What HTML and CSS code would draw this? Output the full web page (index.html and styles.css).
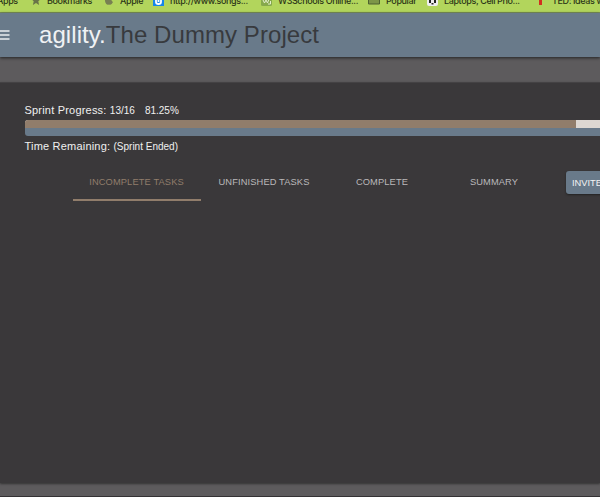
FILE: index.html
```html
<!DOCTYPE html>
<html lang="en">
<head>
<meta charset="utf-8">
<title>agility.</title>
<link rel="stylesheet" href="styles.css">
</head>
<body>
<nav class="bookmarks">
  <span class="bookmark"><span>Apps</span></span>
  <span class="bookmark"><svg width="10" height="10" viewBox="0 0 10 10"><path d="M5 0l1.400 3.400L10 3.800 7.300 6.200 8.100 10 5 8 1.900 10l.8-3.800L0 3.800l3.600-.4z" fill="#697448"/></svg><span>Bookmarks</span></span>
  <span class="bookmark"><svg width="10" height="10" viewBox="0 0 10 10"><path d="M5 3C3 1 .7 3 1 6c.4 3 2.300 4.500 4 3.500 1.700 1 3-.5 4-2.500C7 6 7.200 4 8.500 3 7.300 2 6 2.200 5 3zM5 2c0-1 1-2 2-2 0 1-1 2-2 2z" fill="#788052"/></svg><span>Apple</span></span>
  <span class="bookmark"><svg width="11" height="11" viewBox="0 0 11 11"><path fill="#1686e8" d="M0 0h11v11H0z"/><path d="M3 5v2q0 2 2.500 2T8 7V3M5.500 3v4" stroke="#fff" stroke-width="1.800" fill="none"/></svg><span>http://www.songs...</span></span>
  <span class="bookmark"><svg width="11" height="11" viewBox="0 0 11 11"><rect width="11" height="11" rx="1.500" fill="#86a94c"/><path d="M2 5l1.500 3L5 5l1.500 3L8 4M7 9h2.500V6" stroke="#e3edcb" fill="none"/></svg><span>W3Schools Online...</span></span>
  <span class="bookmark"><svg width="12" height="11" viewBox="0 0 12 11"><path d="M.5 1h4l1 1h6v7H.5z" fill="#7d9648" stroke="#4e6130"/></svg><span>Popular</span></span>
  <span class="bookmark"><svg width="11" height="11" viewBox="0 0 11 11"><rect width="11" height="11" rx="2" fill="#eee"/><path d="M2 5h2v3H2zm5 0h2v3H7zM4.500 8h2v1.500h-2z" fill="#222"/></svg><span>Laptops, Cell Pho...</span></span>
  <span class="bookmark ted"><svg width="4" height="11" viewBox="0 0 4 11"><path fill="#d22f20" d="M0 0h3v10H0z"/></svg><span>TED: Ideas worth...</span></span>
</nav>
<header class="appbar">
  <svg class="menu" width="10" height="10" viewBox="0 0 10 10"><path d="M0 1h9.500M0 5h9.500M0 9h9.500" stroke="#e9edf0" stroke-width="1.400"/></svg>
  <h1><span class="brand">agility.</span><span class="project">The Dummy Project</span></h1>
</header>
<main class="page">
  <section class="panel">
    <div class="line progress-line"><span>Sprint Progress:</span> <small>13/16</small><small class="percent">81.25%</small></div>
    <div class="bars">
      <div class="track"><div class="done"></div></div>
      <div class="time"></div>
    </div>
    <div class="line time-line"><span>Time Remaining:</span> <small class="ended">(Sprint Ended)</small></div>
    <div class="tabs">
      <button class="tab active"><span>INCOMPLETE TASKS</span></button>
      <button class="tab"><span>UNFINISHED TASKS</span></button>
      <button class="tab complete"><span>COMPLETE</span></button>
      <button class="tab summary"><span>SUMMARY</span></button>
      <button class="invite">INVITE</button>
    </div>
  </section>
</main>
</body>
</html>
```

FILE: styles.css
```css
* { box-sizing: border-box; }
html { background: #5d5b5d; }
body {
  margin: 0;
  width: 600px;
  height: 497px;
  overflow: hidden;
  font-family: "Liberation Sans", Arial, sans-serif;
}
.bookmarks {
  display: grid;
  grid-template-columns: 34px 73px 49px 108px 107px 59px 112px 100px;
  height: 13px;
  overflow: hidden;
  background: #b2d55c;
  border-bottom: 1px solid #7d9459;
  color: #2c3518;
  font: 500 9px/12px Inter, sans-serif;
  letter-spacing: -0.38px;
  white-space: nowrap;
}
.bookmark {
  display: flex;
  gap: 6px;
  margin: -5px 0 0 -3px;
  height: 12px;
}
.ted { gap: 9px; }
.appbar {
  display: flex;
  align-items: center;
  height: 44px;
  background: #697a8a;
  color: #f0f2f4;
  box-shadow: 0 1px 3px #222;
}
.menu { flex: none; }
.appbar h1 {
  margin: 0 0 0 29px;
  font-size: 24px;
  font-weight: 400;
  letter-spacing: 0.07px;
  line-height: 44px;
  white-space: nowrap;
}
.project { color: #383a3e; }
.page { padding-top: 25px; height: 440px; border-bottom: 1px solid #343234; }
.panel {
  height: 401px;
  padding: 20px 0 0 24.5px;
  overflow: hidden;
  background: #3a383a;
  border-top: 1px solid #444244;
  box-shadow: 0 1px 2px #333;
}
.line {
  height: 16px;
  color: #f0f0f0;
  font-size: 11px;
  letter-spacing: 0.2px;
  line-height: 14px;
  white-space: nowrap;
}
.line small { font-size: 10px; letter-spacing: 0; }
.line .percent { margin-left: 10px; }
.bars { height: 16.5px; margin-top: 0.5px; overflow: hidden; border-radius: 3px 0 0 3px; }
.track { height: 8px; background: #ddd7d2; }
.done { width: 551.5px; height: 8px; background: #917d6b; }
.time { height: 9px; background: #697a8a; }
.time-line { padding-top: 3px; }
.tabs {
  display: flex;
  align-items: flex-start;
  width: 620px;
  margin: 11px 0 0 48px;
}
button { border: 0; padding: 0; font: 9.3px "Liberation Sans", Arial, sans-serif; white-space: nowrap; }
.tab { width: 128px; height: 38px; background: none; color: #bab9ba; letter-spacing: 0.12px; }
.tab span { margin-left: -1px; }
.tab.complete { width: 108px; }
.tab.summary { width: 116px; }
.tab.active { color: #917d6b; border-bottom: 2px solid #917d6b; padding-top: 2px; }
.tab.active span { margin-left: 0; }
.invite {
  width: 72px;
  height: 23px;
  margin: 8px 0 0 13.5px;
  padding-left: 6px;
  border-radius: 3px;
  background: #697a8a;
  color: #f3f3f3;
  text-align: left;
  box-shadow: 0 1px 2px #222;
}
```
